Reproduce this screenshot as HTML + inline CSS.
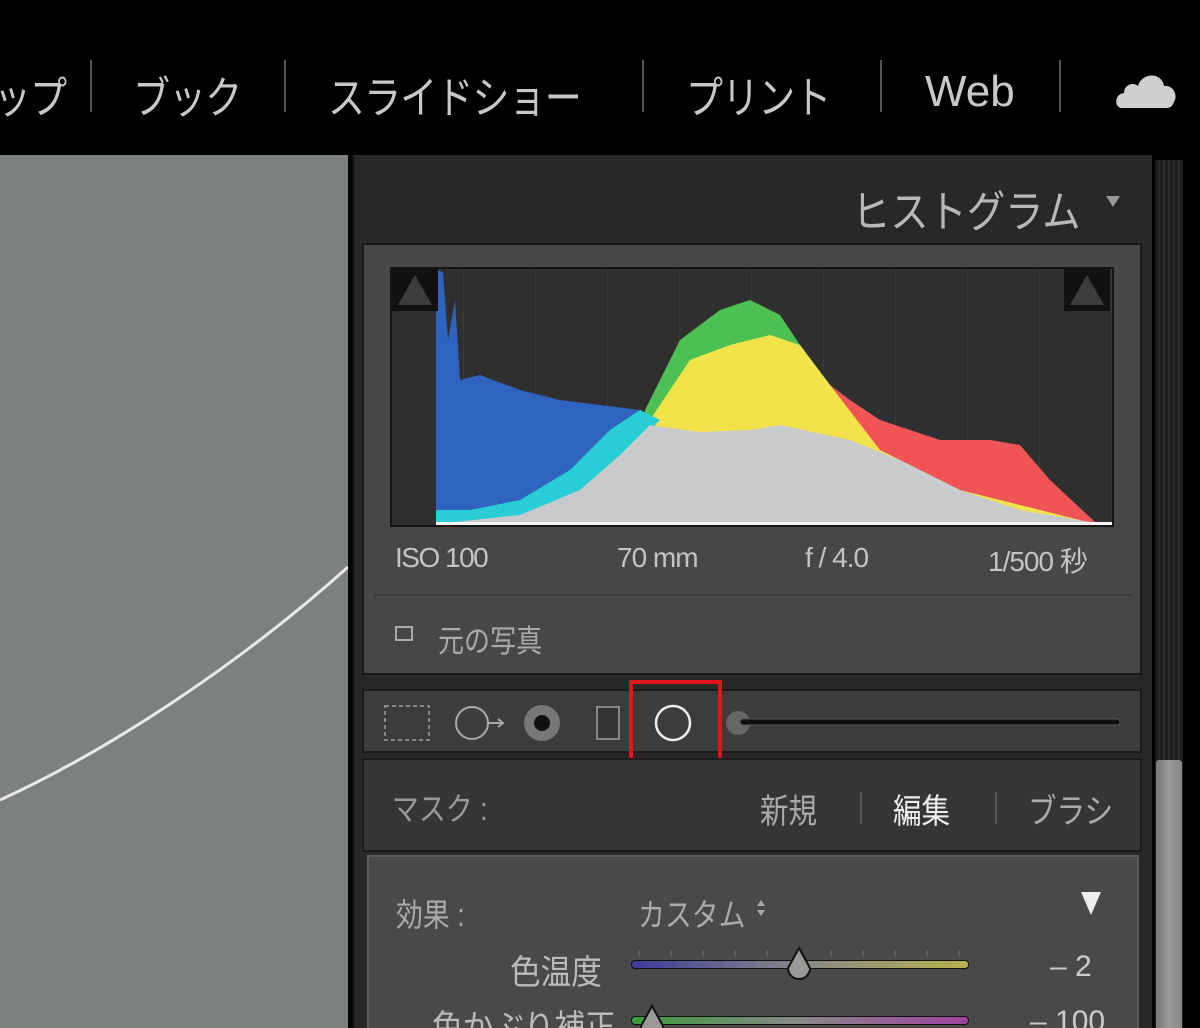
<!DOCTYPE html>
<html><head><meta charset="utf-8"><style>
*{margin:0;padding:0;box-sizing:border-box}
html,body{width:1200px;height:1028px;overflow:hidden}
body{background:#000;position:relative;font-family:"Liberation Sans","Noto Sans CJK JP",sans-serif;color:#c4c4c4}
.a{position:absolute;white-space:nowrap}
.s{transform:scaleX(0.84);transform-origin:0 0}
.t{font-size:44px;top:62px;color:#c8c8c8;letter-spacing:-1px}
.sep{position:absolute;top:60px;width:2px;height:52px;background:#555}
</style></head><body>
<div class="a t s" style="left:-6px">ップ</div>
<div class="sep" style="left:90px"></div>
<div class="a t s" style="left:133px">ブック</div>
<div class="sep" style="left:284px"></div>
<div class="a t s" style="left:328px">スライドショー</div>
<div class="sep" style="left:642px"></div>
<div class="a t s" style="left:686px">プリント</div>
<div class="sep" style="left:880px"></div>
<div class="a t" style="left:925px;top:67px;letter-spacing:0">Web</div>
<div class="sep" style="left:1059px"></div>
<svg class="a" style="left:1116px;top:68px" width="64" height="44"><path d="M6 40 C-2 40 -2 26 8 25 C8 16 18 14 22 18 C26 4 46 4 48 18 C58 17 62 28 58 34 C56 39 54 40 50 40 Z" fill="#cfcfcf"/></svg>

<div class="a" style="left:0;top:155px;width:348px;height:873px;background:#7c807e"></div>
<svg class="a" style="left:0;top:155px" width="348" height="873"><path d="M0 645 C120 590 250 500 348 412" stroke="#e8e8e8" stroke-width="3" fill="none"/></svg>

<div class="a" style="left:352px;top:155px;width:800px;height:873px;background:#282828;border-left:2px solid #111"></div>
<div class="a" style="left:1155px;top:160px;width:28px;height:868px;background:repeating-linear-gradient(90deg,#1e1e1e 0 3px,#2c2c2c 3px 5px)"></div>
<div class="a" style="left:1156px;top:760px;width:26px;height:268px;background:linear-gradient(90deg,#777,#999,#888);border-radius:3px 3px 0 0"></div>

<div class="a s" style="left:852px;top:176px;font-size:44px;color:#b8b8b8;transform:scaleX(0.87)">ヒストグラム</div>
<svg class="a" style="left:1104px;top:193px" width="18" height="16"><path d="M2 3 L16 3 L9 14Z" fill="#999"/></svg>

<div class="a" style="left:362px;top:243px;width:780px;height:432px;background:#474747;border:2px solid #1a1a1a"></div>
<div class="a" style="left:390px;top:267px;width:724px;height:260px;background:#2f2f2f;border:2px solid #151515;background-image:repeating-linear-gradient(90deg,transparent 0 71px,#3a3a3a 71px 72px)"></div>
<svg class="a" style="left:390px;top:267px" width="724" height="260">
<g transform="translate(-390,-267)">
<polygon points="830,385 850,400 880,420 940,440 990,440 1020,445 1050,480 1095,522 830,522" fill="#f05555"/>
<polygon points="645,410 680,340 720,310 750,300 780,315 800,345 830,385 850,420 830,522 645,522" fill="#4cc052"/>
<polygon points="650,420 690,360 730,345 770,335 800,345 830,385 880,450 960,490 1080,520 1090,524 650,524" fill="#f2e34a"/>
<polygon points="436,524 436,270 443,272 448,340 455,300 460,380 480,375 520,390 560,400 600,405 640,410 620,440 590,470 550,500 500,515 460,512 436,524" fill="#2e63c0"/>
<polygon points="436,524 436,510 470,510 520,500 570,470 610,430 640,410 660,420 600,480 540,515 436,524" fill="#28cdd6"/>
<polygon points="436,524 520,515 580,490 620,455 650,425 700,432 750,430 780,425 850,440 900,460 960,490 1020,510 1090,522 1112,524" fill="#c8cacc"/>
<rect x="436" y="522" width="676" height="3" fill="#f4f4f4"/>
</g>
<rect x="2" y="2" width="46" height="42" fill="#111"/><path d="M8 38 L25 8 L42 38Z" fill="#3c3c3c"/>
<rect x="674" y="2" width="46" height="42" fill="#111"/><path d="M680 38 L697 8 L714 38Z" fill="#3c3c3c"/>
</svg>
<div class="a" style="left:395px;top:542px;font-size:28px;letter-spacing:-1.5px">ISO 100</div>
<div class="a" style="left:617px;top:542px;font-size:28px;letter-spacing:-1px">70 mm</div>
<div class="a" style="left:805px;top:542px;font-size:28px;letter-spacing:-1px">f / 4.0</div>
<div class="a" style="left:988px;top:540px;font-size:28px;letter-spacing:-1px">1/500 秒</div>
<div class="a" style="left:374px;top:594px;width:758px;height:2px;background:#3a3a3a"></div>
<div class="a" style="left:395px;top:626px;width:18px;height:15px;border:2px solid #aaa"></div>
<div class="a s" style="left:438px;top:616px;font-size:31px;color:#aaa">元の写真</div>

<div class="a" style="left:362px;top:689px;width:780px;height:64px;background:#3c3c3c;border:2px solid #1a1a1a"></div>
<svg class="a" style="left:362px;top:689px" width="780" height="64">
<rect x="23" y="17" width="44" height="34" fill="none" stroke="#888" stroke-width="2" stroke-dasharray="4 3"/>
<circle cx="110" cy="34" r="16" fill="none" stroke="#aaa" stroke-width="2"/><path d="M126 34 L140 34 M136 30 L141 34 L136 38" stroke="#aaa" stroke-width="2" fill="none"/>
<circle cx="180" cy="34" r="18" fill="#777"/><circle cx="180" cy="34" r="8" fill="#111"/>
<rect x="235" y="18" width="22" height="32" fill="#333" stroke="#888" stroke-width="2"/>
<circle cx="311" cy="34" r="17" fill="none" stroke="#eee" stroke-width="2.5"/>
<circle cx="376" cy="34" r="12" fill="#666"/>
<rect x="378" y="30" width="380" height="6" rx="3" fill="#111" stroke="#555"/>
</svg>
<div class="a" style="left:629px;top:680px;width:93px;height:86px;border:4px solid #e0141a"></div>

<div class="a" style="left:362px;top:758px;width:780px;height:94px;background:#353535;border:2px solid #1c1c1c"></div>
<div class="a s" style="left:392px;top:784px;font-size:32px;color:#999">マスク :</div>
<div class="a s" style="left:760px;top:784px;font-size:34px;color:#aaa">新規</div>
<div class="a" style="left:860px;top:792px;width:2px;height:32px;background:#555"></div>
<div class="a s" style="left:893px;top:784px;font-size:34px;color:#eee">編集</div>
<div class="a" style="left:995px;top:792px;width:2px;height:32px;background:#555"></div>
<div class="a s" style="left:1028px;top:784px;font-size:34px;color:#aaa">ブラシ</div>

<div class="a" style="left:367px;top:855px;width:772px;height:180px;background:#494949;border:2px solid #5c5c5c"></div>
<div class="a s" style="left:396px;top:890px;font-size:32px;color:#aaa">効果 :</div>
<div class="a s" style="left:638px;top:890px;font-size:32px;color:#aaa">カスタム</div>
<svg class="a" style="left:755px;top:897px" width="12" height="22"><path d="M6 3 L10 9 L2 9Z M6 19 L10 13 L2 13Z" fill="#aaa"/></svg>
<svg class="a" style="left:1078px;top:888px" width="26" height="30"><path d="M3 4 L23 4 L13 27Z" fill="#eee"/></svg>
<div class="a s" style="left:510px;top:945px;font-size:34px;color:#bbb;transform:scaleX(0.9)">色温度</div>
<svg class="a" style="left:631px;top:948px" width="340" height="8"><g stroke="#777" stroke-width="1">
<path d="M8 2v6M40 2v6M72 2v6M104 2v6M136 2v6M168 2v6M200 2v6M232 2v6M264 2v6M296 2v6M328 2v6"/></g></svg>
<div class="a" style="left:631px;top:960px;width:338px;height:9px;border-radius:4px;background:linear-gradient(90deg,#3c3c9a,#888,#b8b050);border:1px solid #111"></div>
<svg class="a" style="left:784px;top:946px" width="30" height="36"><path d="M15 2 L26 22 A11 11 0 1 1 4 22Z" fill="#999" stroke="#111" stroke-width="2"/></svg>
<div class="a" style="left:1050px;top:950px;font-size:30px;color:#ccc">– 2</div>
<div class="a s" style="left:432px;top:1000px;font-size:34px;color:#bbb;transform:scaleX(0.9)">色かぶり補正</div>
<div class="a" style="left:631px;top:1016px;width:338px;height:9px;border-radius:4px;background:linear-gradient(90deg,#3c9a3c,#888,#a040a0);border:1px solid #111"></div>
<svg class="a" style="left:637px;top:1004px" width="30" height="36"><path d="M15 2 L26 22 A11 11 0 1 1 4 22Z" fill="#999" stroke="#111" stroke-width="2"/></svg>
<div class="a" style="left:1030px;top:1005px;font-size:30px;color:#ccc">– 100</div>
</body></html>
